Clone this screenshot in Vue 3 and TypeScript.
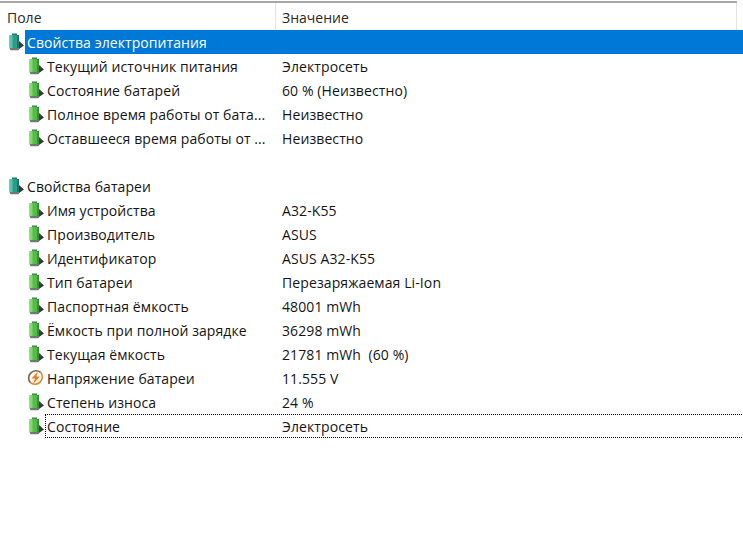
<script setup lang="ts">
interface Row { label: string; value?: string; level: number; icon?: 'battery' | 'bolt'; selected?: boolean; focused?: boolean }
const rows: Row[] = [
  { label: 'Свойства электропитания', level: 0, icon: 'battery', selected: true },
  { label: 'Текущий источник питания', value: 'Электросеть', level: 1, icon: 'battery' },
  { label: 'Состояние батарей', value: '60 % (Неизвестно)', level: 1, icon: 'battery' },
  { label: 'Полное время работы от бата...', value: 'Неизвестно', level: 1, icon: 'battery' },
  { label: 'Оставшееся время работы от ...', value: 'Неизвестно', level: 1, icon: 'battery' },
  { label: '', level: 0 },
  { label: 'Свойства батареи', level: 0, icon: 'battery' },
  { label: 'Имя устройства', value: 'A32-K55', level: 1, icon: 'battery' },
  { label: 'Производитель', value: 'ASUS', level: 1, icon: 'battery' },
  { label: 'Идентификатор', value: 'ASUS A32-K55', level: 1, icon: 'battery' },
  { label: 'Тип батареи', value: 'Перезаряжаемая Li-Ion', level: 1, icon: 'battery' },
  { label: 'Паспортная ёмкость', value: '48001 mWh', level: 1, icon: 'battery' },
  { label: 'Ёмкость при полной зарядке', value: '36298 mWh', level: 1, icon: 'battery' },
  { label: 'Текущая ёмкость', value: '21781 mWh  (60 %)', level: 1, icon: 'battery' },
  { label: 'Напряжение батареи', value: '11.555 V', level: 1, icon: 'bolt' },
  { label: 'Степень износа', value: '24 %', level: 1, icon: 'battery' },
  { label: 'Состояние', value: 'Электросеть', level: 1, icon: 'battery', focused: true },
]
</script>

<template>
  <div class="page">
    <div class="head">
      <div class="head-cell first">Поле</div>
      <div class="head-cell">Значение</div>
    </div>
    <div class="list">
      <div
        v-for="(r, i) in rows"
        :key="i"
        class="row"
        :class="{ sub: r.level === 1, top: r.level === 0 }"
      >
        <svg v-if="r.icon === 'battery'" class="ico" viewBox="0 0 18 18">
          <rect x="5" y="0.5" width="5" height="2" :fill="r.level === 0 ? '#1f7f5c' : '#2f8f3a'" />
          <rect x="2.5" y="2" width="9.5" height="13" rx="1" :fill="r.level === 0 ? '#2a9d86' : '#55bb48'" />
          <rect x="2.5" y="2" width="3" height="13" :fill="r.level === 0 ? '#5cc4b0' : '#86d872'" />
          <rect x="10" y="2" width="2" height="13" :fill="r.level === 0 ? '#1c7767' : '#349332'" />
          <path d="M12 8 L17 12.5 L12 16 Z" fill="#333d38" />
          <path d="M2.5 15 H13 L11.5 17.2 H3.5 Z" fill="#6f7873" />
        </svg>
        <svg v-else-if="r.icon === 'bolt'" class="ico" viewBox="0 0 18 18">
          <circle cx="8.5" cy="8.5" r="7.4" fill="#fff8ef" />
          <path d="M3.3 13.7 A7.4 7.4 0 0 1 13.7 3.3" fill="none" stroke="#6f6a64" stroke-width="1.6" />
          <path d="M13.7 3.3 A7.4 7.4 0 0 1 3.3 13.7" fill="none" stroke="#dd8534" stroke-width="1.6" />
          <path d="M10.8 2.4 L4.6 9.6 H8 L6.2 15 L12.8 7.4 H9.4 Z" fill="#ee7d1c" />
        </svg>
        <span v-else class="ico"></span>
        <div class="name" :class="{ selected: r.selected, focused: r.focused }">
          <span class="label">{{ r.label }}</span>
          <span v-if="r.value" class="value">{{ r.value }}</span>
        </div>
      </div>
    </div>
  </div>
</template>

<style>
html, body { margin: 0; background: #fff; }
</style>

<style scoped>
.page {
  width: 743px;
  height: 542px;
  overflow: hidden;
  background: #fff;
  color: #151515;
  font-family: "Open Sans", "Noto Sans", "Liberation Sans", sans-serif;
  font-size: 14px;
  box-sizing: border-box;
  padding-top: 1px;
}
.head {
  display: flex;
  height: 29px;
  border-top: 2px solid #a8a8a8;
  box-sizing: border-box;
  width: 737px;
}
.head-cell {
  padding: 5px 0 0 6px;
  line-height: 20px;
  color: #2a2a2a;
  border-right: 1px solid #e3e3e3;
  flex: 1;
}
.head-cell.first { flex: 0 0 276px; box-sizing: border-box; padding-left: 7px; }
.row {
  display: flex;
  align-items: center;
  height: 24px;
  width: 737px;
}
.row.top { padding-left: 7px; }
.row.sub { padding-left: 27px; }
.ico { width: 18px; height: 18px; flex: none; }
.name {
  flex: 1;
  display: flex;
  height: 24px;
  align-items: center;
  box-sizing: border-box;
  white-space: pre;
  padding-left: 2px;
}
.label { width: 235px; flex: none; letter-spacing: 0.08px; }
.row.top .label { width: auto; }
.value { flex: none; letter-spacing: 0.1px; }
.selected { background: #0078d7; color: #fff; }
.row.sub .focused { border: 1px dotted #000; padding-left: 1px; }
</style>
